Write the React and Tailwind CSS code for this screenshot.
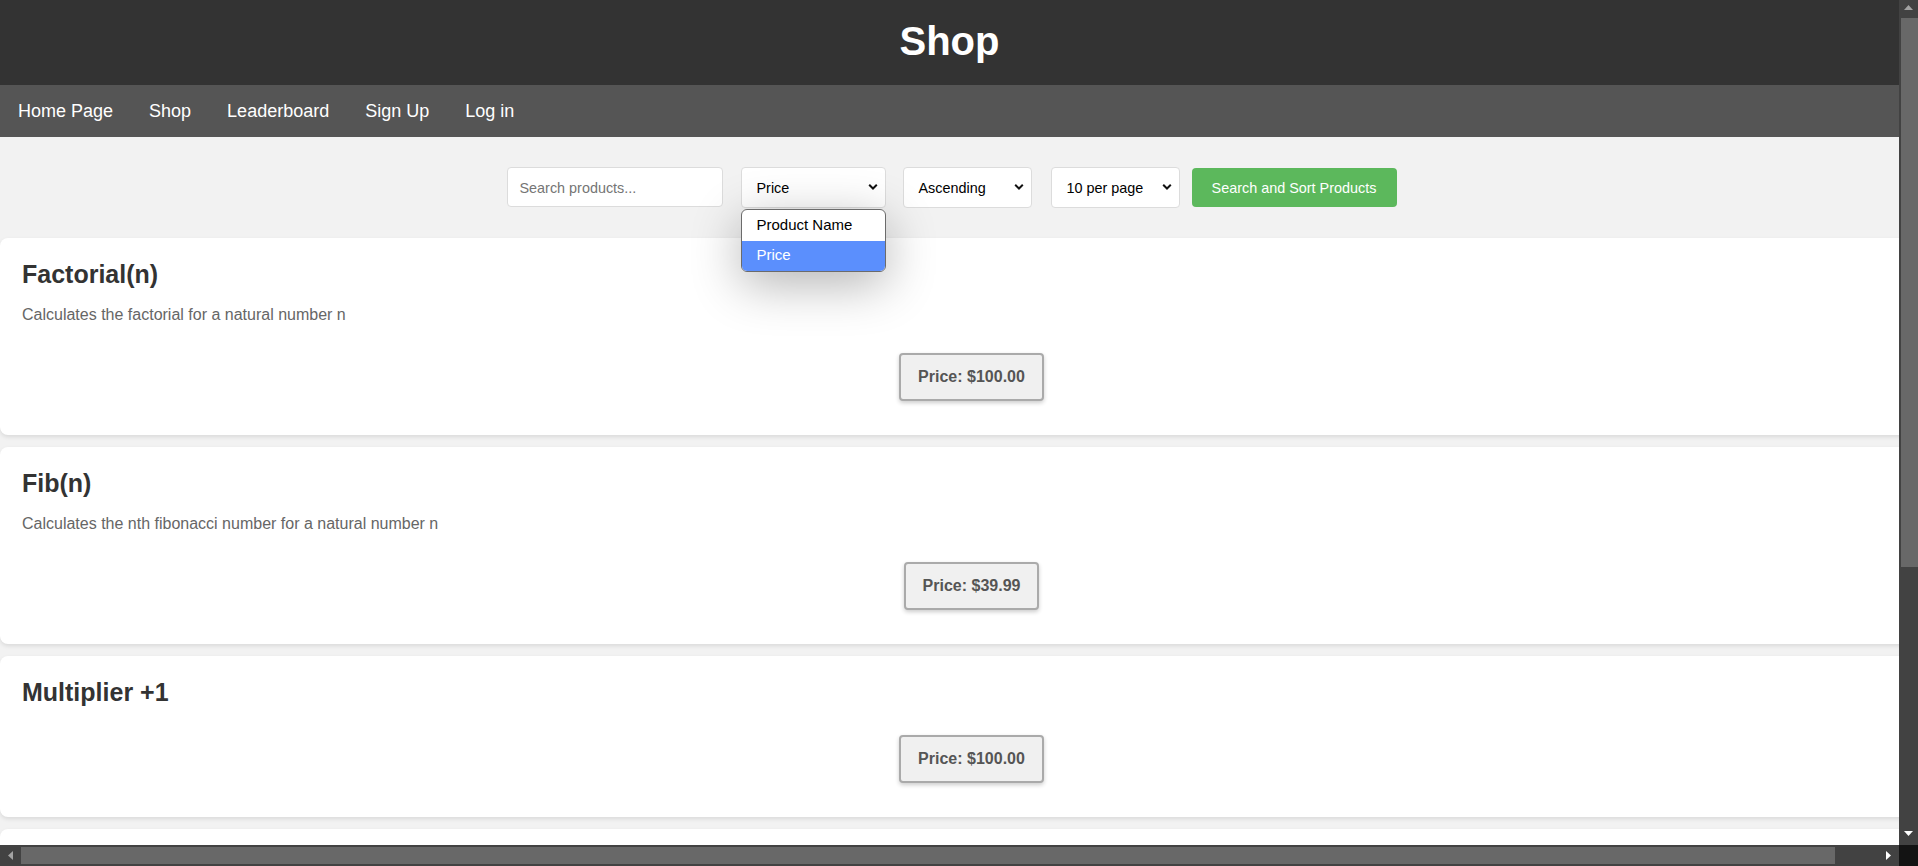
import React from "react";

const font = { fontFamily: '"Liberation Sans", Arial, sans-serif' };

function Chevron() {
  return (
    <svg width="10" height="7" viewBox="0 0 10 7" className="absolute right-[7px] top-1/2 -translate-y-1/2">
      <path d="M1.2 1.3 L5 5 L8.8 1.3" fill="none" stroke="#111" strokeWidth="2" />
    </svg>
  );
}

function Select({ label, width, children }) {
  return (
    <div className={`relative h-[41px] ${width} rounded-[4px] border border-[#dcdcdc] bg-white`}>
      <div className="flex h-full items-center pl-[15px] pt-[3px] text-[14.4px] text-black">{label}</div>
      <Chevron />
      {children}
    </div>
  );
}

const products = [
  { title: "Factorial(n)", desc: "Calculates the factorial for a natural number n", price: "$100.00" },
  { title: "Fib(n)", desc: "Calculates the nth fibonacci number for a natural number n", price: "$39.99" },
  { title: "Multiplier +1", desc: null, price: "$100.00" },
];

function Card({ p }) {
  return (
    <div className="w-[1943px] rounded-[8px] bg-white px-[22px] pt-[22px] pb-[34px] shadow-[0_2px_4px_rgba(0,0,0,0.1)]">
      <h2 className="text-[25px] font-bold leading-[29px] text-[#333]">{p.title}</h2>
      {p.desc && (
        <p className="mt-[17px] text-[16px] leading-[18px] text-[#666]">{p.desc}</p>
      )}
      <div className={`flex justify-center ${p.desc ? "mt-[29px]" : "mt-[28px]"}`}>
        <div className="flex h-[48px] items-center rounded-[4px] border-2 border-[#aaa] bg-[#f0f0f0] px-[17px] text-[16px] font-bold text-[#555] shadow-[0_2px_4px_rgba(0,0,0,0.2)]">
          Price: {p.price}
        </div>
      </div>
    </div>
  );
}

export default function App() {
  return (
    <div style={font} className="flex h-[866px] w-[1918px] flex-col overflow-hidden bg-[#f2f2f2]">
      <div className="flex min-h-0 flex-1">
        <div className="w-[1899px] overflow-hidden">
          <div className="w-[1899px]">
            <header className="flex h-[85px] items-start justify-center bg-[#333333] pt-[18px]">
              <h1 className="text-[40px] font-bold leading-[46px] text-white">Shop</h1>
            </header>
            <nav className="flex h-[52px] items-center bg-[#555555]">
              {["Home Page", "Shop", "Leaderboard", "Sign Up", "Log in"].map((t) => (
                <span key={t} className="px-[18px] text-[18px] leading-[21px] text-white">{t}</span>
              ))}
            </nav>
            <div className="flex h-[100px] items-center justify-center pl-[4px] bg-[#f2f2f2]">
              <div className="flex h-[40px] w-[216px] items-center rounded-[4px] border border-[#dcdcdc] bg-white pl-[12px] pt-[3px] text-[14.4px] text-[#757575]">
                Search products...
              </div>
              <div className="ml-[18px]">
                <Select label="Price" width="w-[145px]">
                  <div className="absolute left-[-1px] top-[41px] z-10 w-[145px] overflow-hidden rounded-[6px] border border-[#6b6b6b] bg-white shadow-[0_12px_50px_rgba(0,0,0,0.3)]">
                    <div className="flex h-[31px] items-center pl-[15px] text-[15px] text-black">Product Name</div>
                    <div className="flex h-[30px] items-center bg-[#5b8ffd] pl-[15px] text-[15px] text-white">Price</div>
                  </div>
                </Select>
              </div>
              <div className="ml-[17px]">
                <Select label="Ascending" width="w-[129px]" />
              </div>
              <div className="ml-[19px]">
                <Select label="10 per page" width="w-[129px]" />
              </div>
              <div className="ml-[12px] flex h-[39px] w-[205px] items-center justify-center rounded-[4px] bg-[#5cb85c] pt-[3px] text-[14.4px] text-white">
                Search and Sort Products
              </div>
            </div>
            <div className="flex flex-col gap-[12px] pt-[1px]">
              {products.map((p, i) => (
                <Card key={i} p={p} />
              ))}
              <div className="h-[160px] w-[1943px] rounded-[8px] bg-white shadow-[0_2px_4px_rgba(0,0,0,0.1)]" />
            </div>
          </div>
        </div>
        {/* vertical scrollbar */}
        <div className="flex w-[19px] flex-col bg-[#424242]">
          <div className="flex h-[18px] items-center justify-center pb-[3px]">
            <svg width="9" height="5" viewBox="0 0 9 5"><path d="M0 5 L4.5 0 L9 5 Z" fill="#a3a3a3" /></svg>
          </div>
          <div className="ml-[2px] h-[549px] w-[17px] bg-[#686868]" />
          <div className="flex-1" />
          <div className="flex h-[18px] items-start justify-center pt-[4px]">
            <svg width="9" height="5" viewBox="0 0 9 5"><path d="M0 0 L4.5 5 L9 0 Z" fill="#ffffff" /></svg>
          </div>
        </div>
      </div>
      {/* horizontal scrollbar */}
      <div className="flex h-[21px]">
        <div className="flex w-[1899px] items-center bg-[#424242]">
          <div className="flex w-[21px] items-center justify-center">
            <svg width="5" height="9" viewBox="0 0 5 9"><path d="M5 0 L0 4.5 L5 9 Z" fill="#a3a3a3" /></svg>
          </div>
          <div className="h-[17px] w-[1814px] bg-[#686868]" />
          <div className="flex flex-1 items-center justify-end pr-[8px]">
            <svg width="5" height="9" viewBox="0 0 5 9"><path d="M0 0 L5 4.5 L0 9 Z" fill="#ffffff" /></svg>
          </div>
        </div>
        <div className="w-[19px] bg-[#131313]" />
      </div>
    </div>
  );
}
